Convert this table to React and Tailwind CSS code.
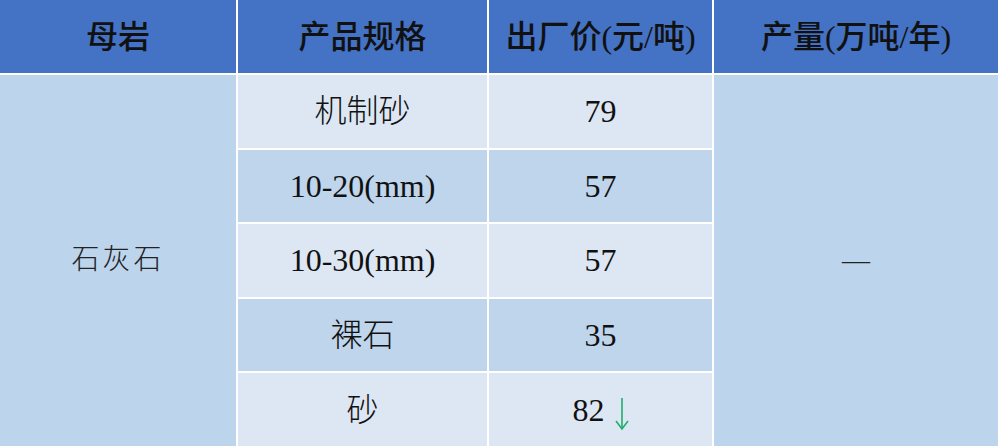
const rows = [
  { spec: '机制砂', price: '79', light: true },
  { spec: '10-20(mm)', price: '57', light: false },
  { spec: '10-30(mm)', price: '57', light: true },
  { spec: '裸石', price: '35', light: false },
  { spec: '砂', price: '82', light: true, down: true },
]

function HeadCell({ children }) {
  return (
    <div className="flex items-center justify-center bg-[#4472c4] text-[32px] font-medium text-[#111]">
      {children}
    </div>
  )
}

function DownArrow() {
  return (
    <svg width="14" height="34" viewBox="0 0 14 34" className="ml-[10px] mt-[8px]">
      <path d="M7 1 V31" stroke="#1fae6a" strokeWidth="1.6" fill="none" />
      <path d="M1 24 L7 32 L13 24" stroke="#1fae6a" strokeWidth="1.6" fill="none" />
    </svg>
  )
}

export default function App() {
  return (
    <div className="grid h-[446px] w-[998px] grid-cols-[236px_249px_223px_1fr] grid-rows-[73px_repeat(5,1fr)] gap-[2px] bg-white font-['Liberation_Serif','Times_New_Roman','Noto_Sans_CJK_SC',serif]">
      <HeadCell>母岩</HeadCell>
      <HeadCell>产品规格</HeadCell>
      <HeadCell>出厂价(元/吨)</HeadCell>
      <HeadCell>产量(万吨/年)</HeadCell>

      <div className="row-span-5 row-start-2 flex items-center justify-center bg-[#bdd5ec] text-[28px] font-light tracking-[3px] text-[#222]">
        石灰石
      </div>

      {rows.map((r, i) => (
        <div key={i} className="contents">
          <div
            className={`col-start-2 flex items-center justify-center text-[32px] font-light text-[#111] ${r.light ? 'bg-[#dde7f3]' : 'bg-[#bfd5ec]'}`}
          >
            {r.spec}
          </div>
          <div
            className={`col-start-3 flex items-center justify-center text-[32px] text-[#111] ${r.light ? 'bg-[#dde7f3]' : 'bg-[#bfd5ec]'}`}
          >
            {r.price}
            {r.down && <DownArrow />}
          </div>
        </div>
      ))}

      <div className="col-start-4 row-span-5 row-start-2 flex items-center justify-center bg-[#bdd5ec] text-[28px] text-[#222]">
        —
      </div>
    </div>
  )
}
